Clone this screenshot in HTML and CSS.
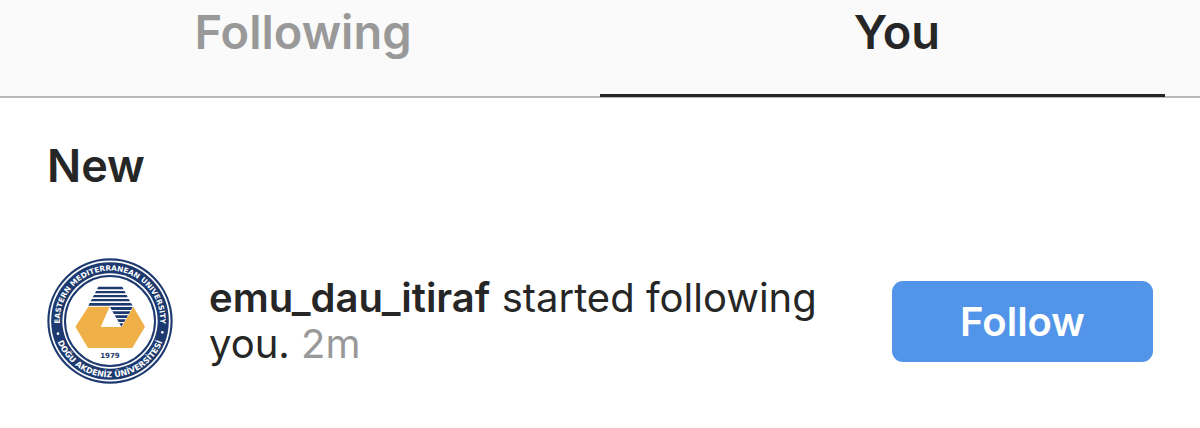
FILE: index.html
```html
<!DOCTYPE html>
<html lang="en">
<head>
    <meta charset="UTF-8">
    <meta name="viewport" content="width=device-width, initial-scale=1.0">
    <title>Activity</title>
    <link rel="stylesheet" href="styles.css">
</head>
<body>
    <nav class="tabs">
        <a class="tab" href="#following">Following</a>
        <a class="tab active" href="#you" aria-current="page">You</a>
    </nav>
    <main class="activity">
        <h2 class="section-title">New</h2>
        <div class="notification">
            <svg class="avatar" viewBox="21 22 378 378" role="img" aria-label="Eastern Mediterranean University">
                <defs>
                    <path id="arc-top" d="M 210 362 A 151 151 0 0 1 210 60 A 151 151 0 0 1 210 362"/>
                    <path id="arc-bottom" d="M 210 42 A 169 169 0 0 0 210 380 A 169 169 0 0 0 210 42"/>
                </defs>
                <!-- rings -->
                <circle cx="210" cy="211" r="188" fill="#1d3a70"/>
                <circle cx="210" cy="211" r="179" fill="none" stroke="#fff" stroke-width="5"/>
                <circle cx="210" cy="211" r="143" fill="#fff"/>
                <circle cx="210" cy="211" r="135" fill="none" stroke="#1d3a70" stroke-width="6"/>
                <text class="ring-text"><textPath href="#arc-top" startOffset="50%">EASTERN MEDITERRANEAN UNIVERSITY</textPath></text>
                <text class="ring-text ring-text-bottom"><textPath href="#arc-bottom" startOffset="50%">DOĞU AKDENİZ ÜNİVERSİTESİ</textPath></text>
                <circle cx="54" cy="249" r="4" fill="#fff"/>
                <circle cx="367" cy="245" r="4" fill="#fff"/>
                <!-- emblem -->
                <path fill="#f0b048" d="M145 168H210L183 228H245L280 168L315 228L277 292H144L106 228Z"/>
                <path fill="#1d3a70" d="M175 108H247L251 116H171ZM168 121H254L257 128H165ZM162 133H260L263 140H158ZM156 145H266L270 152H152ZM149 157H273L278 165H145Z"/>
                <path fill="#fff" d="M210 165H281L245 228H183Z"/>
                <path fill="#1d3a70" d="M210 169H278L273 178H215ZM217 182H271L267 190H222ZM224 194H264L260 202H229ZM231 206H257L253 214H236ZM238 218H250L244 228Z"/>
                <text class="year" x="210" y="321">1979</text>
            </svg>
            <p class="message"><strong>emu_dau_itiraf</strong> started following you. <time class="time">2m</time></p>
            <button class="follow" type="button">Follow</button>
        </div>
    </main>
</body>
</html>
```

FILE: styles.css
```css
body {
    font-family: Inter, "Liberation Sans", sans-serif;
    margin: 0;
    background-color: #fff;
    color: #262626;
}
.tabs {
    display: flex;
    padding: 0 6px;
    background-color: #fafafa;
    border-bottom: 2px solid #b8b8b8;
}
.tab {
    position: relative;
    flex: 1;
    padding: 4px 0 36px;
    font-size: 47px;
    font-weight: 600;
    line-height: 56px;
    text-align: center;
    text-decoration: none;
    color: #999;
}
.tab.active {
    color: #262626;
}
.tab.active::after {
    content: "";
    position: absolute;
    left: 0;
    right: 29px;
    bottom: -1px;
    height: 3px;
    background-color: #262626;
}
.activity {
    padding: 40px 47px;
}
.section-title {
    margin: 0 0 64px;
    font-size: 45px;
    font-weight: 600;
    line-height: 56px;
}
.notification {
    display: flex;
    align-items: center;
    gap: 36px;
}
.avatar {
    flex: none;
    width: 126px;
    height: 126px;
}
.ring-text {
    font-family: "DejaVu Sans", sans-serif;
    font-size: 22px;
    font-weight: 700;
    fill: #fff;
    text-anchor: middle;
}
.ring-text-bottom {
    font-size: 24px;
}
.year {
    font-family: "DejaVu Sans", sans-serif;
    font-size: 21px;
    font-weight: 700;
    fill: #1d3a70;
    text-anchor: middle;
}
.message {
    flex: 1;
    margin: 0;
    font-size: 40px;
    line-height: 46px;
}
.message strong {
    font-weight: 600;
}
.time {
    color: #999;
}
.follow {
    width: 261px;
    height: 81px;
    border: none;
    border-radius: 11px;
    background-color: #5295e8;
    color: #fff;
    font-family: inherit;
    font-size: 40px;
    font-weight: 600;
    cursor: pointer;
}
```
